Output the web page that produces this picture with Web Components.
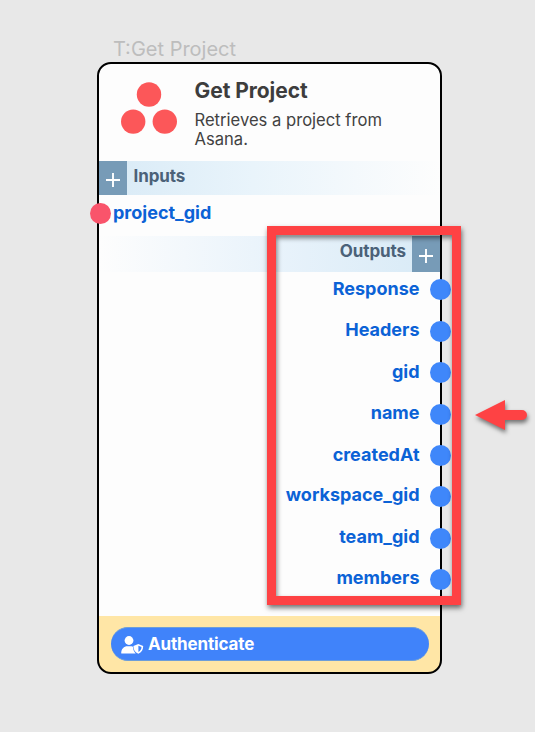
<!DOCTYPE html>
<html lang="en">
<head>
<meta charset="utf-8">
<title>Get Project</title>
<style>
body{margin:0;width:535px;height:732px;overflow:hidden;background:#e8e8e8;font-family:Inter,"Liberation Sans",sans-serif}
</style>
</head>
<body>
<flow-canvas>
  <flow-node caption="T:Get Project">
    <node-header slot="header" heading="Get Project">Retrieves a project from<br>Asana.</node-header>
    <port-band>Inputs</port-band>
    <node-port side="in">project_gid</node-port>
    <port-band side="out">Outputs</port-band>
    <node-port>Response</node-port>
    <node-port>Headers</node-port>
    <node-port>gid</node-port>
    <node-port>name</node-port>
    <node-port style="--shift:1px">createdAt</node-port>
    <node-port style="--shift:-1px">workspace_gid</node-port>
    <node-port>team_gid</node-port>
    <node-port style="--shift:-1px">members</node-port>
    <auth-button slot="footer">Authenticate</auth-button>
  </flow-node>
  <callout-frame slot="overlay"></callout-frame>
  <callout-arrow slot="overlay"></callout-arrow>
</flow-canvas>
<script>
const define = (name, html, setup) => customElements.define(name, class extends HTMLElement {
  constructor() {
    super();
    this.attachShadow({mode: 'open'}).innerHTML = html;
  }
  connectedCallback() { if (setup) setup(this, this.shadowRoot); }
});

define('flow-canvas', `
<style>
:host{display:block;position:relative;box-sizing:border-box;width:535px;height:732px;padding:36px 0 0 97px}
</style><slot></slot><slot name="overlay"></slot>`);

define('flow-node', `
<style>
:host{display:block;width:345px}
.caption{height:26px;line-height:26px;padding-left:16px;font-size:20px;color:#bdbdbd;white-space:nowrap}
.card{display:flex;flex-direction:column;box-sizing:border-box;height:612px;border:2px solid #000;border-radius:14px;background:linear-gradient(#fdfdfd 0 552px,#ffe6a6 552px)}
.rows{height:455px}
</style>
<div class="caption"></div>
<div class="card"><slot name="header"></slot><div class="rows"><slot></slot></div><slot name="footer"></slot></div>`,
(el, root) => { root.querySelector('.caption').textContent = el.getAttribute('caption'); });

define('node-header', `
<style>
:host{display:flex;box-sizing:border-box;height:97px;padding:18px 0 0 22px;gap:16.5px}
svg{flex:none;display:block;width:57px;height:54px}
h2{margin:-3px 0 0;font-size:21px;line-height:24px;font-weight:700;letter-spacing:-.05px;color:#3d3d3d;white-space:nowrap}
p{margin:8px 0 0;font-size:16.6px;line-height:19px;color:#424242;white-space:nowrap}
</style>
<svg viewBox="0 0 57 54" fill="#fc5759"><circle cx="28" cy="12.5" r="12.2"/><circle cx="12.2" cy="39.6" r="12.2"/><circle cx="43.8" cy="39.6" r="12.2"/></svg>
<div><h2></h2><p><slot></slot></p></div>`,
(el, root) => { root.querySelector('h2').textContent = el.getAttribute('heading'); });

define('port-band', `
<style>
:host{display:flex;height:34px;gap:6.5px;background:linear-gradient(90deg,#d8eaf6,#e9f4fb 45%,#fdfdfd);font-size:17px;font-weight:700;letter-spacing:-.1px;color:#4b6178}
:host([side=out]){flex-direction:row-reverse;height:35.5px;gap:6px;background:linear-gradient(270deg,#d8eaf6,#e9f3fb 50%,#fdfdfd)}
.add{flex:none;display:grid;place-items:center;width:28px;height:100%;background:#779bb7}
svg{display:block;width:16px;height:16px;margin-top:4px}
.label{line-height:30px}
:host([side=out]) .label{line-height:31px}
</style>
<div class="add"><svg viewBox="0 0 16 16" stroke="#fff" stroke-width="1.9"><path d="M8 1v14M1 8h14"/></svg></div>
<div class="label"><slot></slot></div>`);

define('node-port', `
<style>
:host{display:flex;flex-direction:row-reverse;align-items:center;box-sizing:border-box;height:41.45px;margin-right:-11px;gap:10.5px;font-size:18px;font-weight:700;color:#0b62d6}
:host([side=in]){flex-direction:row;height:41px;margin:0 0 0 -9px;gap:2px}
.dot{flex:none;width:21px;height:21px;border-radius:50%;background:#3f87fa;margin-top:-5px}
:host([side=in]) .dot{background:#f9546b}
.text{line-height:24px;margin-top:-7px;transform:translateY(var(--shift,0))}
:host([side=in]) .text{margin-top:-5px}
</style>
<div class="dot"></div><div class="text"><slot></slot></div>`);

define('auth-button', `
<style>
:host{display:block;padding:11px 11px 0 12px}
button{display:flex;align-items:center;gap:4px;box-sizing:border-box;width:318px;height:34px;padding:0 0 0 10px;border:1px solid #6e9ed8;border-width:1px 0;border-radius:17px;background:#4083fa;color:#fff;font:700 17px Inter,"Liberation Sans",sans-serif;letter-spacing:-.14px}
svg{display:block;width:23px;height:18px;margin-top:1px}
</style>
<button><svg viewBox="0 0 23 18"><circle cx="8" cy="4.5" r="4.4" fill="#fff"/><path d="M.2 17.2c0-4.2 2.8-6.9 6.2-6.9h4.2l1.4.4c0 2.8 1 5 2.7 6.8H1.2q-1 0-1-.3z" fill="#fff"/><path fill="#fff" fill-rule="evenodd" d="M17.3 7.9 22.2 9.9c.1 3.5-1.6 6.5-4.9 7.9-3.3-1.4-5-4.4-4.9-7.9zM17.4 9.7v6.2c2.1-1.1 3.1-2.7 3.1-4.9z"/></svg><slot></slot></button>`);

define('callout-frame', `
<style>
:host{display:block;position:absolute;left:267px;top:226px;box-sizing:border-box;width:194px;height:379px;border:9px solid #fe4244;box-shadow:1px 3px 5px rgba(0,0,0,.55),inset 1px 3px 5px rgba(0,0,0,.5)}
</style>`);

define('callout-arrow', `
<style>
:host{display:block;position:absolute;left:475px;top:399px}
svg{display:block;overflow:visible;filter:drop-shadow(1px 3px 2px rgba(0,0,0,.5))}
</style>
<svg width="53" height="32" fill="#fe4244"><path d="M0 16 30 1v10h17a5 5 0 0 1 0 10H30v10z"/></svg>`);
</script>
</body>
</html>
